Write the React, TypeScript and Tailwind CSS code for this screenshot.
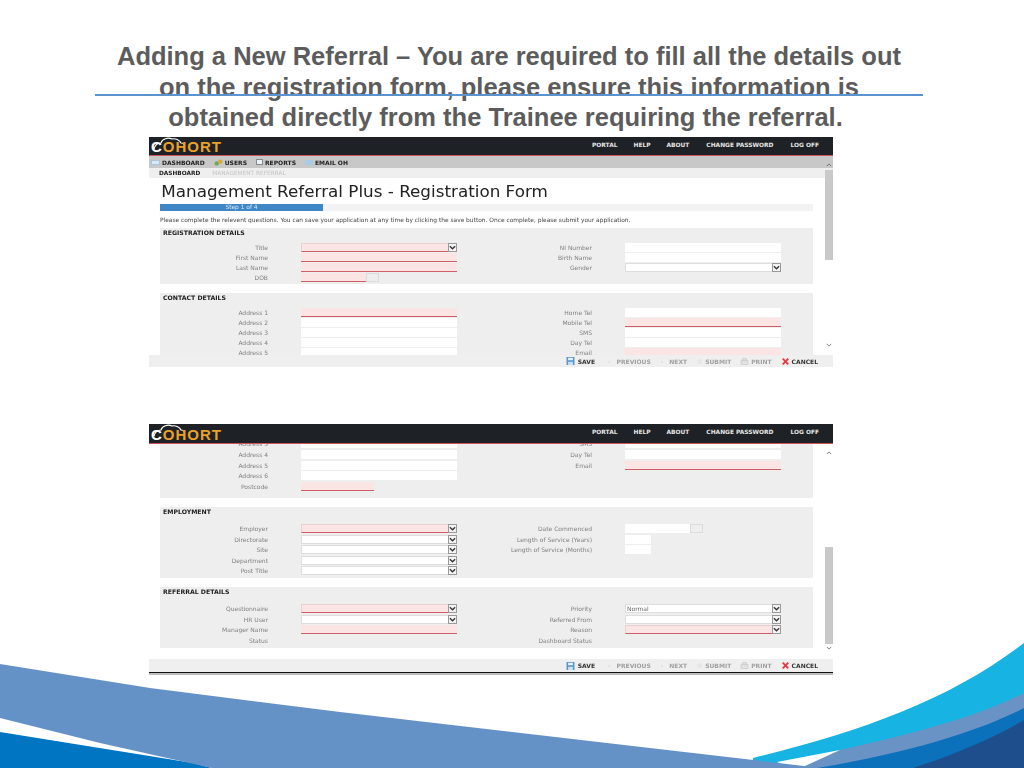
import type { ReactNode } from "react";

type Field = {
  label: string;
  kind?: "text" | "select" | "date";
  required?: boolean;
  width?: string;
  value?: string;
};

function Input({ field }: { field: Field }) {
  const { kind = "text", required, width = "w-[156px]", value } = field;
  const tone = required ? "bg-[#fbe4e4] border-b border-[#cf5f67]" : "bg-white";
  if (kind === "date") {
    return (
      <div className="flex">
        <div className={`h-[9px] w-[65px] ${tone}`} />
        <div className="h-[9px] w-[13px] border border-[#dcdcdc] bg-[#eeeeee]" />
      </div>
    );
  }
  const frame = kind !== "select" ? "" : required ? "border-x border-t border-x-[#ead0d0] border-t-[#ead0d0]" : "border border-[#dedede]";
  return (
    <div className={`relative h-[9px] ${width} ${tone} ${frame}`}>
      {value ? <span className="absolute left-[1px] top-[-1px] text-[6px] leading-[9px] text-[#666]">{value}</span> : null}
      {kind === "select" ? (
        <span className="absolute right-[-1px] top-[-1px] flex h-[9px] w-[9px] items-center justify-center border border-[#999] bg-[#f4f4f4]">
          <svg viewBox="0 0 8 8" className="h-[7px] w-[7px]" fill="none" stroke="#333" strokeWidth="1.5">
            <path d="M1 2.5 L4 5.5 L7 2.5" />
          </svg>
        </span>
      ) : null}
    </div>
  );
}

function Row({ left, right, height }: { left?: Field; right?: Field; height: string }) {
  return (
    <div className={`flex ${height}`}>
      <div className="flex w-[297px]">
        <span className="w-[108px] text-right text-[6px] leading-[9px] text-[#808080]">{left?.label}</span>
        <div className="ml-[33px]">{left && left.label !== "Status" ? <Input field={left} /> : null}</div>
      </div>
      <div className="flex">
        <span className="w-[135px] text-right text-[6px] leading-[9px] text-[#808080]">{right?.label}</span>
        <div className="ml-[33px]">{right && right.label !== "Dashboard Status" ? <Input field={right} /> : null}</div>
      </div>
    </div>
  );
}

function Section({ title, className, children }: { title?: string; className: string; children: ReactNode }) {
  return (
    <section className={`ml-[11px] w-[653px] bg-[#eeeeee] ${className}`}>
      {title ? <h3 className="pl-[3px] pt-[1px] text-[6.2px] font-bold leading-[8px] text-[#222]">{title}</h3> : null}
      {children}
    </section>
  );
}

function Logo() {
  return (
    <div className="relative h-full w-[80px]">
      <svg viewBox="0 0 40 16" className="absolute left-0 top-0 h-[16px] w-[40px]" fill="none" stroke="#fff" strokeWidth="1.1">
        <path d="M5 12 C6 8 9 6 12 6 C13 2 19 0 23 2 C26 1 31 3 32 6 C34 6 35 7 35 8" />
      </svg>
      <span className="absolute bottom-[-1px] left-[2px] text-[15px] font-bold leading-[18px] tracking-[1px] text-[#e8a12a] [font-family:'Liberation_Sans',sans-serif]">
        <span className="text-white">C</span>OHORT
      </span>
    </div>
  );
}

function TopBar({ height }: { height: string }) {
  return (
    <header className={`flex ${height} shrink-0 items-center justify-between border-b border-[#c9555a] bg-[#1e2125] pr-[14px]`}>
      <Logo />
      <nav className="mb-[2px] flex gap-[16px] text-[5.9px] font-bold text-[#e6e6e6]">
        <span>PORTAL</span>
        <span>HELP</span>
        <span>ABOUT</span>
        <span className="mx-[1px]">CHANGE PASSWORD</span>
        <span>LOG OFF</span>
      </nav>
    </header>
  );
}

function FloppyIcon() {
  return (
    <svg viewBox="0 0 10 10" className="h-[8px] w-[9px]">
      <rect width="10" height="10" fill="#5a97cf" />
      <rect x="2" y="1" width="6" height="3" fill="#e8f1f8" />
      <rect x="2" y="6" width="6" height="4" fill="#cfe0ee" />
    </svg>
  );
}

function CrossIcon() {
  return (
    <svg viewBox="0 0 10 10" className="h-[7px] w-[7px]" fill="none" stroke="#e8383d" strokeWidth="2.6">
      <path d="M1 1 L9 9 M9 1 L1 9" />
    </svg>
  );
}

function PrinterIcon() {
  return (
    <svg viewBox="0 0 12 10" className="h-[7px] w-[9px]" fill="#e2e2e2" stroke="#bdbdbd" strokeWidth="0.8">
      <path d="M3 4 V1 H9 V4" />
      <rect x="1" y="4" width="10" height="5" />
    </svg>
  );
}

function Footer({ height }: { height: string }) {
  return (
    <footer className={`flex ${height} shrink-0 items-center justify-end bg-[#efefef] pr-[15px] text-[6px] font-bold text-[#a0a0a0]`}>
      <FloppyIcon />
      <span className="ml-[3px] text-[#333]">SAVE</span>
      <span className="ml-[13px] text-[#d5d5d5]">‹</span>
      <span className="ml-[6px]">PREVIOUS</span>
      <span className="ml-[10px] text-[#d5d5d5]">›</span>
      <span className="ml-[6px]">NEXT</span>
      <span className="ml-[10px] h-[5px] w-[5px] rounded-full bg-[#e6e6e6]" />
      <span className="ml-[3px]">SUBMIT</span>
      <span className="ml-[9px]"><PrinterIcon /></span>
      <span className="ml-[2px]">PRINT</span>
      <span className="ml-[10px]"><CrossIcon /></span>
      <span className="ml-[3px] text-[#333]">CANCEL</span>
    </footer>
  );
}

function Scrollbar({ upClass, thumbClass, downClass }: { upClass: string; thumbClass: string; downClass: string }) {
  return (
    <>
      <svg viewBox="0 0 8 5" className={`absolute right-[1px] h-[4px] w-[6px] ${upClass}`} fill="none" stroke="#555" strokeWidth="1">
        <path d="M1 4 L4 1 L7 4" />
      </svg>
      <div className={`absolute right-0 w-[8px] bg-[#c9c9c9] ${thumbClass}`} />
      <svg viewBox="0 0 8 5" className={`absolute right-[1px] h-[4px] w-[6px] ${downClass}`} fill="none" stroke="#555" strokeWidth="1">
        <path d="M1 1 L4 4 L7 1" />
      </svg>
    </>
  );
}

function MenuItem({ icon, label }: { icon: ReactNode; label: string }) {
  return (
    <span className="flex items-center gap-[2px]">
      {icon}
      {label}
    </span>
  );
}

function FirstScreen() {
  const h = "h-[10px]";
  return (
    <div className="flex h-[230px] w-[684px] flex-col blur-[0.4px]">
      <TopBar height="h-[19px]" />
      <div className="relative min-h-0 flex-1 overflow-hidden bg-white">
        <div className="flex h-[12px] items-center gap-[9px] bg-[#c8c8c8] pl-[2px] text-[6px] font-bold text-[#222]">
          <MenuItem icon={<span className="h-[5px] w-[9px] border border-[#a9c6de] bg-[#dbe8f2]" />} label="DASHBOARD" />
          <MenuItem
            icon={
              <svg viewBox="0 0 10 8" className="h-[7px] w-[9px]">
                <circle cx="3" cy="5" r="2.5" fill="#6fa84e" />
                <circle cx="7" cy="3" r="2.5" fill="#d9a93a" />
              </svg>
            }
            label="USERS"
          />
          <MenuItem icon={<span className="h-[6px] w-[7px] border border-[#888] bg-[#eaf2f8]" />} label="REPORTS" />
          <MenuItem icon={<span className="h-[5px] w-[8px] rounded-[1px] bg-[#a9cbe6]" />} label="EMAIL OH" />
        </div>
        <div className="flex h-[10px] items-center gap-[12px] bg-[#efefef] pl-[10px] text-[5.8px]">
          <span className="font-bold text-[#222]">DASHBOARD</span>
          <span className="text-[#c4c4c4]">MANAGEMENT REFERRAL</span>
        </div>
        <h1 className="origin-left scale-x-[1.118] pl-[11px] pt-[5px] text-[15px] leading-[18px] text-[#222]">Management Referral Plus - Registration Form</h1>
        <div className="ml-[11px] mt-[3px] flex h-[7px] w-[653px] bg-[#f3f3f3]">
          <div className="w-[163px] bg-[#3f86c6] text-center text-[5.9px] leading-[7px] text-[#d8e8f5]">Step 1 of 4</div>
        </div>
        <p className="ml-[11px] whitespace-nowrap pt-[6px] text-[5.9px] leading-[7px] text-[#444]">
          Please complete the relevent questions. You can save your application at any time by clicking the save button. Once complete, please submit your application.
        </p>
        <Section title="REGISTRATION DETAILS" className="mt-[4px] h-[56px]">
          <div className="pt-[6px]">
            <Row height={h} left={{ label: "Title", kind: "select", required: true }} right={{ label: "NI Number" }} />
            <Row height={h} left={{ label: "First Name", required: true }} right={{ label: "Birth Name" }} />
            <Row height={h} left={{ label: "Last Name", required: true }} right={{ label: "Gender", kind: "select" }} />
            <Row height={h} left={{ label: "DOB", kind: "date", required: true }} />
          </div>
        </Section>
        <Section title="CONTACT DETAILS" className="mt-[9px]">
          <div className="pt-[6px]">
            <Row height={h} left={{ label: "Address 1", required: true }} right={{ label: "Home Tel" }} />
            <Row height={h} left={{ label: "Address 2" }} right={{ label: "Mobile Tel", required: true }} />
            <Row height={h} left={{ label: "Address 3" }} right={{ label: "SMS" }} />
            <Row height={h} left={{ label: "Address 4" }} right={{ label: "Day Tel" }} />
            <Row height={h} left={{ label: "Address 5" }} right={{ label: "Email", required: true }} />
          </div>
        </Section>
        <Scrollbar upClass="top-[7px]" thumbClass="top-[14px] h-[90px]" downClass="top-[187px]" />
      </div>
      <Footer height="h-[12px]" />
    </div>
  );
}

function SecondScreen() {
  const h = "h-[10.6px]";
  return (
    <div className="flex h-[251px] w-[684px] flex-col blur-[0.4px]">
      <TopBar height="h-[20px]" />
      <div className="relative min-h-0 flex-1 overflow-hidden bg-white">
        <Section className="h-[54px] overflow-hidden">
          <div className="-mt-[4.6px]">
            <Row height={h} left={{ label: "Address 3" }} right={{ label: "SMS" }} />
            <Row height={h} left={{ label: "Address 4" }} right={{ label: "Day Tel" }} />
            <Row height={h} left={{ label: "Address 5" }} right={{ label: "Email", required: true }} />
            <Row height={h} left={{ label: "Address 6" }} />
            <Row height={h} left={{ label: "Postcode", required: true, width: "w-[73px]" }} />
          </div>
        </Section>
        <Section title="EMPLOYMENT" className="mt-[9px] h-[71px]">
          <div className="pt-[8px]">
            <Row height={h} left={{ label: "Employer", kind: "select", required: true }} right={{ label: "Date Commenced", kind: "date" }} />
            <Row height={h} left={{ label: "Directorate", kind: "select" }} right={{ label: "Length of Service (Years)", width: "w-[26px]" }} />
            <Row height={h} left={{ label: "Site", kind: "select" }} right={{ label: "Length of Service (Months)", width: "w-[26px]" }} />
            <Row height={h} left={{ label: "Department", kind: "select" }} />
            <Row height={h} left={{ label: "Post Title", kind: "select" }} />
          </div>
        </Section>
        <Section title="REFERRAL DETAILS" className="mt-[9px] h-[61px]">
          <div className="pt-[8px]">
            <Row height={h} left={{ label: "Questionnaire", kind: "select", required: true }} right={{ label: "Priority", kind: "select", value: "Normal" }} />
            <Row height={h} left={{ label: "HR User", kind: "select" }} right={{ label: "Referred From", kind: "select" }} />
            <Row height={h} left={{ label: "Manager Name", required: true }} right={{ label: "Reason", kind: "select", required: true }} />
            <Row height={h} left={{ label: "Status" }} right={{ label: "Dashboard Status" }} />
          </div>
        </Section>
        <Scrollbar upClass="top-[7px]" thumbClass="top-[103px] h-[97px]" downClass="top-[202px]" />
      </div>
      <Footer height="h-[13px]" />
      <div className="h-[3px] shrink-0 border-t-[1.5px] border-[#111] bg-[#bdbdbd]" />
    </div>
  );
}

function Waves() {
  return (
    <svg viewBox="0 0 1024 128" className="absolute bottom-0 left-0 h-[128px] w-[1024px]">
      <path d="M753 118 C860 92 950 60 1024 3 V128 H753 Z" fill="#17b4e3" />
      <path d="M777 122 L840 110 L820 128 H790 Z" fill="#ffffff" />
      <path d="M805 126 L840 110 C900 96 970 80 1024 53 V128 H805 Z" fill="#6a93c5" />
      <path d="M817 128 C890 116 970 96 1024 68 V128 Z" fill="#0b71bb" />
      <path d="M913 128 C950 116 990 100 1024 80 V128 Z" fill="#1f4e8c" />
      <path d="M0 92 L193 123 L212 128 H0 Z" fill="#0075c2" />
      <path d="M0 24 L150 48 L340 72 L804 126 L817 128 H212 L100 103 L0 78 Z" fill="#6592c6" />
    </svg>
  );
}

export default function App() {
  return (
    <div className="relative h-[768px] w-[1024px] overflow-hidden bg-white [font-family:'DejaVu_Sans',sans-serif]">
      <Waves />
      <h2 className="relative ml-[109px] w-[800px] pt-[41px] text-center text-[25.5px] font-bold leading-[30.5px] text-[#5c5c5c] [font-family:'Liberation_Sans',sans-serif]">
        <span className="block">Adding a New Referral – You are required to fill all the details out</span>
        <span className="block">on the registration form, please ensure this information is</span>
        <span className="block pr-[7px]">obtained directly from the Trainee requiring the referral.</span>
      </h2>
      <div className="absolute left-[95px] top-[94px] h-[2px] w-[828px] bg-[#5b93cf]" />
      <div className="relative ml-[149px] mt-[4.5px] flex flex-col gap-[57px]">
        <FirstScreen />
        <SecondScreen />
      </div>
    </div>
  );
}
